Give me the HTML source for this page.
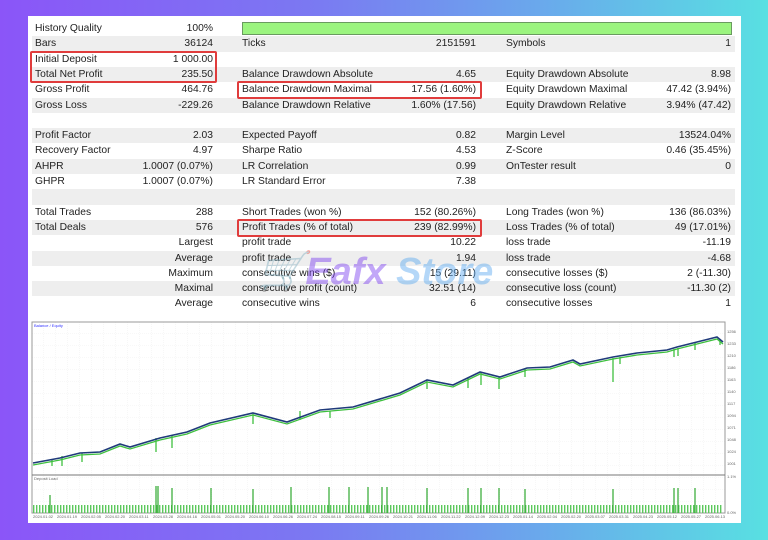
<!DOCTYPE html>
<html><head><meta charset="utf-8"><style>
*{margin:0;padding:0;box-sizing:border-box}
body{width:768px;height:540px;overflow:hidden;background:linear-gradient(90deg,#8b55f8 0%,#7b78f2 40%,#6aa8ec 70%,#58e0e2 100%);font-family:"Liberation Sans",sans-serif;font-size:10.3px;color:#222;position:relative}
.card{position:absolute;left:28px;top:16px;width:713px;height:507px;background:#fff}
.row{position:absolute;left:32px;width:703px;height:15.3px}
.g{background:#eeeeee}
.t{position:absolute;top:2px;white-space:nowrap;line-height:12px}
.r{text-align:right}
.box{position:absolute;border:2px solid #e03c3c;border-radius:2px}
</style></head><body>
<div class="card"></div>
<div id="rows"></div>
<div style="position:absolute;left:242px;top:22px;width:490px;height:13px;background:#9bf47f;border:1px solid #6a9a60"></div>
<script>
var R=[
["History Quality","100%","","","",""],
["Bars","36124","Ticks","2151591","Symbols","1"],
["Initial Deposit","1 000.00","","","",""],
["Total Net Profit","235.50","Balance Drawdown Absolute","4.65","Equity Drawdown Absolute","8.98"],
["Gross Profit","464.76","Balance Drawdown Maximal","17.56 (1.60%)","Equity Drawdown Maximal","47.42 (3.94%)"],
["Gross Loss","-229.26","Balance Drawdown Relative","1.60% (17.56)","Equity Drawdown Relative","3.94% (47.42)"],
["","","","","",""],
["Profit Factor","2.03","Expected Payoff","0.82","Margin Level","13524.04%"],
["Recovery Factor","4.97","Sharpe Ratio","4.53","Z-Score","0.46 (35.45%)"],
["AHPR","1.0007 (0.07%)","LR Correlation","0.99","OnTester result","0"],
["GHPR","1.0007 (0.07%)","LR Standard Error","7.38","",""],
["","","","","",""],
["Total Trades","288","Short Trades (won %)","152 (80.26%)","Long Trades (won %)","136 (86.03%)"],
["Total Deals","576","Profit Trades (% of total)","239 (82.99%)","Loss Trades (% of total)","49 (17.01%)"],
["#Largest","","profit trade","10.22","loss trade","-11.19"],
["#Average","","profit trade","1.94","loss trade","-4.68"],
["#Maximum","","consecutive wins ($)","15 (29.11)","consecutive losses ($)","2 (-11.30)"],
["#Maximal","","consecutive profit (count)","32.51 (14)","consecutive loss (count)","-11.30 (2)"],
["#Average","","consecutive wins","6","consecutive losses","1"]];
var h="";
R.forEach(function(r,i){
 var y=21+i*15.3;
 h+='<div class="row'+(i%2?' g':'')+'" style="top:'+y+'px">';
 if(r[0][0]=="#") h+='<div class="t r" style="left:0;width:181px">'+r[0].slice(1)+'</div>';
 else h+='<div class="t" style="left:3px">'+r[0]+'</div>';
 h+='<div class="t r" style="left:80px;width:101px">'+r[1]+'</div>';
 h+='<div class="t" style="left:210px">'+r[2]+'</div>';
 h+='<div class="t r" style="left:300px;width:144px">'+r[3]+'</div>';
 h+='<div class="t" style="left:474px">'+r[4]+'</div>';
 h+='<div class="t r" style="left:560px;width:139px">'+r[5]+'</div>';
 h+='</div>';
});
document.getElementById("rows").innerHTML=h;
</script>
<div class="box" style="left:30px;top:51px;width:187px;height:32px"></div>
<div class="box" style="left:237px;top:81px;width:245px;height:18px"></div>
<div class="box" style="left:237px;top:219px;width:245px;height:18px"></div>
<div style="position:absolute;left:258px;top:250px;font-size:38px;font-weight:bold;font-style:italic;opacity:.45;white-space:nowrap"><span style="color:#7a3df0">&#128722;Eafx</span><span style="color:#5aa8f0"> Store</span></div>
<svg style="position:absolute;left:0;top:0" width="768" height="540">
<defs><pattern id="gr" x="32" y="322" width="12" height="12" patternUnits="userSpaceOnUse"><path d="M12 0V12M0 12H12" stroke="#e4e4e4" stroke-width="0.6" stroke-dasharray="1 1" fill="none"/></pattern>
<pattern id="bars" x="33" y="505" width="3" height="8" patternUnits="userSpaceOnUse"><rect width="1.4" height="8" fill="#5cc85c"/></pattern></defs>
<rect x="32" y="322" width="693" height="191" fill="url(#gr)" stroke="#999" stroke-width="1"/>
<line x1="32" y1="475" x2="725" y2="475" stroke="#777"/>
<rect x="33" y="505" width="690" height="8" fill="url(#bars)"/>
<g stroke="#2fa82f" stroke-width="1.2">
<line x1="50" y1="495" x2="50" y2="513"/><line x1="156" y1="486" x2="156" y2="513"/><line x1="158" y1="486" x2="158" y2="513"/><line x1="172" y1="488" x2="172" y2="513"/><line x1="211" y1="488" x2="211" y2="513"/><line x1="253" y1="489" x2="253" y2="513"/><line x1="291" y1="487" x2="291" y2="513"/><line x1="329" y1="487" x2="329" y2="513"/><line x1="349" y1="487" x2="349" y2="513"/><line x1="368" y1="487" x2="368" y2="513"/><line x1="382" y1="487" x2="382" y2="513"/><line x1="387" y1="487" x2="387" y2="513"/><line x1="427" y1="488" x2="427" y2="513"/><line x1="468" y1="488" x2="468" y2="513"/><line x1="481" y1="488" x2="481" y2="513"/><line x1="499" y1="488" x2="499" y2="513"/><line x1="525" y1="489" x2="525" y2="513"/><line x1="613" y1="489" x2="613" y2="513"/><line x1="674" y1="488" x2="674" y2="513"/><line x1="678" y1="488" x2="678" y2="513"/><line x1="695" y1="488" x2="695" y2="513"/></g>
<g stroke="#3fc03f" stroke-width="1.3">
<line x1="52" y1="459" x2="52" y2="466"/><line x1="62" y1="456" x2="62" y2="466"/><line x1="82" y1="453" x2="82" y2="462"/><line x1="156" y1="438" x2="156" y2="452"/><line x1="172" y1="436" x2="172" y2="448"/><line x1="253" y1="414" x2="253" y2="424"/><line x1="300" y1="411" x2="300" y2="420"/><line x1="330" y1="411" x2="330" y2="418"/><line x1="427" y1="381" x2="427" y2="389"/><line x1="468" y1="378" x2="468" y2="388"/><line x1="481" y1="372" x2="481" y2="385"/><line x1="499" y1="377" x2="499" y2="389"/><line x1="525" y1="369" x2="525" y2="377"/><line x1="613" y1="358" x2="613" y2="382"/><line x1="620" y1="357" x2="620" y2="364"/><line x1="674" y1="349" x2="674" y2="357"/><line x1="678" y1="348" x2="678" y2="356"/><line x1="695" y1="343" x2="695" y2="350"/><line x1="720" y1="339" x2="720" y2="345"/></g>
<polyline fill="none" stroke="#3fc03f" stroke-width="1.3" points="33,465 60,460 80,455 100,454 120,446 130,449 160,440 187,434 210,425 253,415 287,424 320,412 353,409 400,395 427,382 453,387 480,374 500,379 527,370 550,369 573,362 580,366 613,359 637,355 667,352 677,349 697,344 717,339 723,344"/>
<polyline fill="none" stroke="#1f3a7a" stroke-width="1.6" points="33,463 60,458 80,453 100,452 120,444 130,447 160,438 187,432 210,423 253,413 287,422 320,410 353,407 400,393 427,380 453,385 480,372 500,377 527,368 550,367 573,360 580,364 613,357 637,353 667,350 677,347 697,342 717,337 723,342"/>
<g fill="#666" font-size="4" font-family="Liberation Sans">
<text x="33" y="518">2024.01.02</text><text x="57" y="518">2024.01.19</text><text x="81" y="518">2024.02.05</text><text x="105" y="518">2024.02.20</text><text x="129" y="518">2024.03.11</text><text x="153" y="518">2024.03.28</text><text x="177" y="518">2024.04.16</text><text x="201" y="518">2024.05.01</text><text x="225" y="518">2024.05.20</text><text x="249" y="518">2024.06.10</text><text x="273" y="518">2024.06.26</text><text x="297" y="518">2024.07.24</text><text x="321" y="518">2024.08.15</text><text x="345" y="518">2024.09.11</text><text x="369" y="518">2024.09.26</text><text x="393" y="518">2024.10.21</text><text x="417" y="518">2024.11.06</text><text x="441" y="518">2024.11.22</text><text x="465" y="518">2024.12.09</text><text x="489" y="518">2024.12.23</text><text x="513" y="518">2025.01.14</text><text x="537" y="518">2025.02.04</text><text x="561" y="518">2025.02.20</text><text x="585" y="518">2025.03.07</text><text x="609" y="518">2025.03.31</text><text x="633" y="518">2025.04.23</text><text x="657" y="518">2025.05.12</text><text x="681" y="518">2025.05.27</text><text x="705" y="518">2025.06.13</text>
<text x="727" y="333">1256</text><text x="727" y="345">1233</text><text x="727" y="357">1210</text><text x="727" y="369">1186</text><text x="727" y="381">1163</text><text x="727" y="393">1140</text><text x="727" y="405">1117</text><text x="727" y="417">1094</text><text x="727" y="429">1071</text><text x="727" y="441">1048</text><text x="727" y="453">1024</text><text x="727" y="465">1001</text><text x="727" y="478">1.1%</text><text x="727" y="514">0.0%</text>
<text x="34" y="327" fill="#33f">Balance / Equity</text><text x="34" y="480">Deposit Load</text></g>
</svg>
</body></html>
